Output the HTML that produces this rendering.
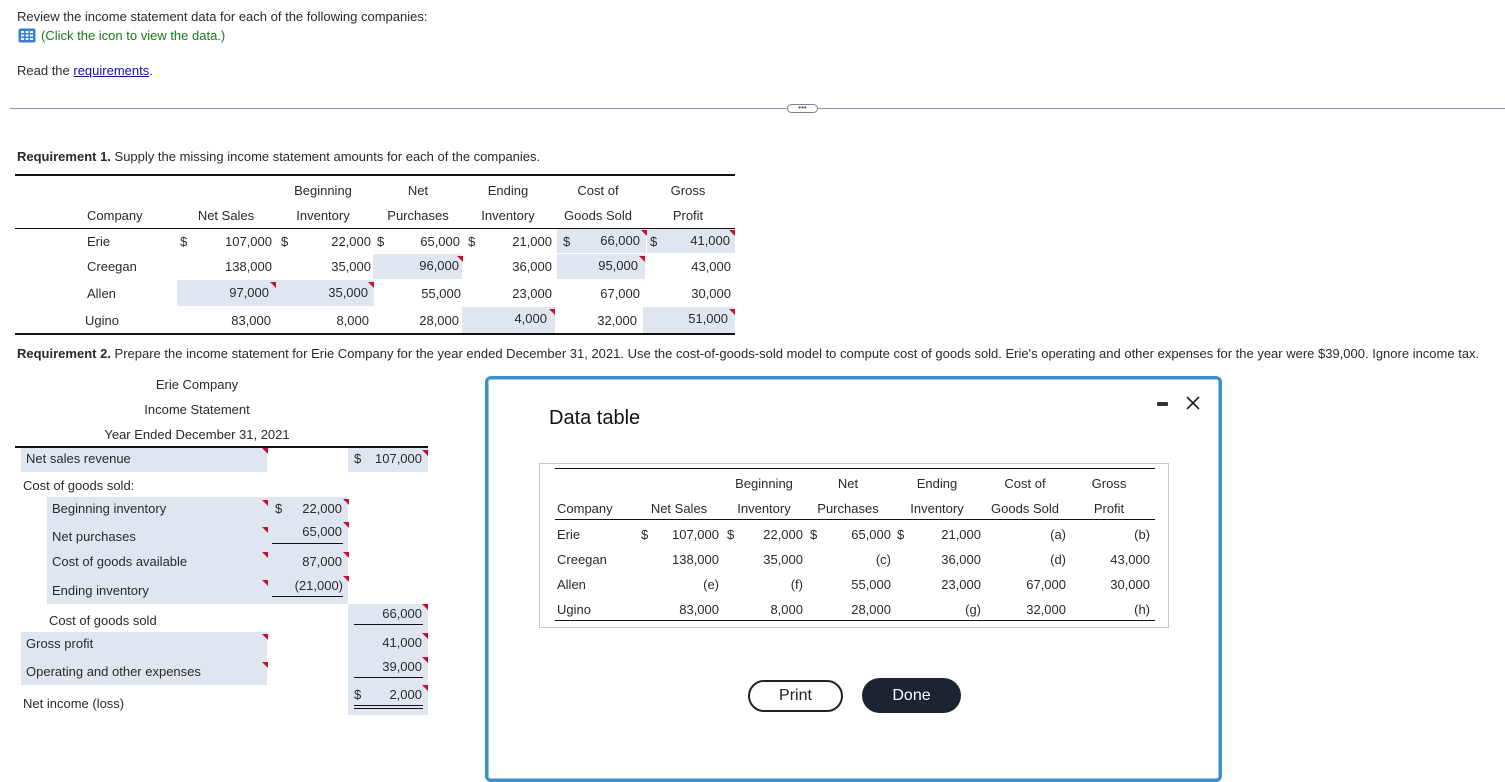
<!DOCTYPE html>
<html><head><meta charset="utf-8"><style>
body{margin:0;width:1505px;height:729px;overflow:hidden;background:#fff;font-family:"Liberation Sans",Arial,sans-serif;font-size:13px;color:#2a2a2a;position:relative}
.a{position:absolute;height:16px;line-height:16px;white-space:nowrap}
.r{text-align:right}.c{text-align:center}
.sh{position:absolute;background:#dfe6f0}
.ln{position:absolute;background:#111;height:2px}
.ul{position:absolute;background:#111;height:1px}
.tri{position:absolute;width:0;height:0;border-top:6px solid #c8102e;border-left:6px solid transparent}
</style></head><body>
<div class="a" style="left:17px;top:9px">Review the income statement data for each of the following companies:</div>
<svg style="position:absolute;left:18px;top:28px" width="18" height="15"><rect x="0.5" y="0.5" width="17" height="14" rx="2" fill="#3a7fd5"/><g fill="#fff"><rect x="3" y="3" width="3" height="2"/><rect x="7.5" y="3" width="3" height="2"/><rect x="12" y="3" width="3" height="2"/><rect x="3" y="6.5" width="3" height="2"/><rect x="7.5" y="6.5" width="3" height="2"/><rect x="12" y="6.5" width="3" height="2"/><rect x="3" y="10" width="3" height="2"/><rect x="7.5" y="10" width="3" height="2"/><rect x="12" y="10" width="3" height="2"/></g></svg>
<div class="a" style="left:41px;top:28px;color:#1a7a1a">(Click the icon to view the data.)</div>
<div class="a" style="left:17px;top:63px">Read the <span style="color:#1a0dab;text-decoration:underline">requirements</span>.</div>
<div style="position:absolute;left:10px;top:108px;width:1495px;height:1px;background:#8a94a4"></div>
<div style="position:absolute;left:787px;top:104px;width:29px;height:7px;border:1px solid #7a8494;border-radius:5px;background:#fff;font-size:8px;line-height:6px;text-align:center;color:#555">•••</div>

<div class="a" style="left:17px;top:149px"><b>Requirement 1.</b> Supply the missing income statement amounts for each of the companies.</div>

<div class="sh" style="left:557px;top:228px;width:89px;height:25px"></div>
<div class="sh" style="left:647px;top:228px;width:88px;height:25px"></div>
<div class="sh" style="left:373px;top:254px;width:89px;height:25px"></div>
<div class="sh" style="left:557px;top:254px;width:88px;height:25px"></div>
<div class="sh" style="left:177px;top:280px;width:197px;height:26px"></div>
<div class="sh" style="left:462px;top:307px;width:93px;height:26px"></div>
<div class="sh" style="left:643px;top:307px;width:92px;height:26px"></div>
<div class="ln" style="left:15px;top:174px;width:720px"></div>
<div class="ln" style="left:15px;top:228px;width:720px;height:1px"></div>
<div class="ln" style="left:15px;top:333px;width:720px"></div>
<div class="tri" style="left:641px;top:230px"></div><div class="tri" style="left:729px;top:230px"></div>
<div class="tri" style="left:457px;top:256px"></div><div class="tri" style="left:639px;top:256px"></div>
<div class="tri" style="left:270px;top:282px"></div><div class="tri" style="left:368px;top:282px"></div>
<div class="tri" style="left:549px;top:309px"></div><div class="tri" style="left:729px;top:309px"></div>

<div class="a c" style="left:283px;width:80px;top:183px">Beginning</div>
<div class="a c" style="left:378px;width:80px;top:183px">Net</div>
<div class="a c" style="left:468px;width:80px;top:183px">Ending</div>
<div class="a c" style="left:558px;width:80px;top:183px">Cost of</div>
<div class="a c" style="left:648px;width:80px;top:183px">Gross</div>
<div class="a" style="left:87px;top:208px">Company</div>
<div class="a c" style="left:186px;width:80px;top:208px">Net Sales</div>
<div class="a c" style="left:283px;width:80px;top:208px">Inventory</div>
<div class="a c" style="left:378px;width:80px;top:208px">Purchases</div>
<div class="a c" style="left:468px;width:80px;top:208px">Inventory</div>
<div class="a c" style="left:558px;width:80px;top:208px">Goods Sold</div>
<div class="a c" style="left:648px;width:80px;top:208px">Profit</div>

<div class="a" style="left:87px;top:234px">Erie</div>
<div class="a" style="left:87px;top:259px">Creegan</div>
<div class="a" style="left:87px;top:286px">Allen</div>
<div class="a" style="left:85px;top:313px">Ugino</div>
<div class="a" style="left:180px;top:234px">$</div>
<div class="a" style="left:281px;top:234px">$</div>
<div class="a" style="left:377px;top:234px">$</div>
<div class="a" style="left:468px;top:234px">$</div>
<div class="a" style="left:563px;top:234px">$</div>
<div class="a" style="left:650px;top:234px">$</div>
<div class="a r" style="left:180px;width:92px;top:234px">107,000</div>
<div class="a r" style="left:280px;width:91px;top:234px">22,000</div>
<div class="a r" style="left:380px;width:80px;top:234px">65,000</div>
<div class="a r" style="left:470px;width:82px;top:234px">21,000</div>
<div class="a r" style="left:560px;width:80px;top:233px">66,000</div>
<div class="a r" style="left:650px;width:80px;top:233px">41,000</div>
<div class="a r" style="left:180px;width:92px;top:259px">138,000</div>
<div class="a r" style="left:280px;width:91px;top:259px">35,000</div>
<div class="a r" style="left:380px;width:79px;top:258px">96,000</div>
<div class="a r" style="left:470px;width:82px;top:259px">36,000</div>
<div class="a r" style="left:560px;width:78px;top:258px">95,000</div>
<div class="a r" style="left:650px;width:81px;top:259px">43,000</div>
<div class="a r" style="left:180px;width:89px;top:285px">97,000</div>
<div class="a r" style="left:280px;width:88px;top:285px">35,000</div>
<div class="a r" style="left:380px;width:81px;top:286px">55,000</div>
<div class="a r" style="left:470px;width:82px;top:286px">23,000</div>
<div class="a r" style="left:560px;width:80px;top:286px">67,000</div>
<div class="a r" style="left:650px;width:81px;top:286px">30,000</div>
<div class="a r" style="left:180px;width:91px;top:313px">83,000</div>
<div class="a r" style="left:280px;width:89px;top:313px">8,000</div>
<div class="a r" style="left:380px;width:79px;top:313px">28,000</div>
<div class="a r" style="left:470px;width:77px;top:311px">4,000</div>
<div class="a r" style="left:560px;width:77px;top:313px">32,000</div>
<div class="a r" style="left:650px;width:78px;top:311px">51,000</div>

<div class="a" style="left:17px;top:346px"><b>Requirement 2.</b> Prepare the income statement for Erie Company for the year ended December 31, 2021. Use the cost-of-goods-sold model to compute cost of goods sold. Erie's operating and other expenses for the year were $39,000. Ignore income tax.</div>

<div class="a c" style="left:97px;width:200px;top:377px">Erie Company</div>
<div class="a c" style="left:97px;width:200px;top:402px">Income Statement</div>
<div class="a c" style="left:97px;width:200px;top:427px">Year Ended December 31, 2021</div>
<div class="ln" style="left:15px;top:446px;width:413px"></div>
<div class="sh" style="left:21px;top:448px;width:246px;height:24px"></div>
<div class="sh" style="left:348px;top:448px;width:80px;height:24px"></div>
<div class="sh" style="left:47px;top:497px;width:301px;height:107px"></div>
<div class="sh" style="left:348px;top:604px;width:80px;height:111px"></div>
<div class="sh" style="left:21px;top:632px;width:246px;height:53px"></div>
<div class="a" style="left:26px;top:451px">Net sales revenue</div>
<div class="a" style="left:354px;top:451px">$</div>
<div class="a r" style="left:360px;width:62px;top:451px">107,000</div>
<div class="a" style="left:23px;top:478px">Cost of goods sold:</div>
<div class="a" style="left:52px;top:501px">Beginning inventory</div>
<div class="a" style="left:52px;top:529px">Net purchases</div>
<div class="a" style="left:52px;top:554px">Cost of goods available</div>
<div class="a" style="left:52px;top:583px">Ending inventory</div>
<div class="a" style="left:275px;top:501px">$</div>
<div class="a r" style="left:280px;width:62px;top:501px">22,000</div>
<div class="a r" style="left:280px;width:62px;top:524px">65,000</div>
<div class="ul" style="left:272px;top:543px;width:71px"></div>
<div class="a r" style="left:280px;width:62px;top:554px">87,000</div>
<div class="a r" style="left:280px;width:63px;top:578px">(21,000)</div>
<div class="ul" style="left:272px;top:596px;width:71px"></div>
<div class="a" style="left:49px;top:613px">Cost of goods sold</div>
<div class="a r" style="left:360px;width:62px;top:606px">66,000</div>
<div class="ul" style="left:354px;top:624px;width:69px"></div>
<div class="a" style="left:26px;top:636px">Gross profit</div>
<div class="a" style="left:26px;top:664px">Operating and other expenses</div>
<div class="a r" style="left:360px;width:62px;top:635px">41,000</div>
<div class="a r" style="left:360px;width:62px;top:659px">39,000</div>
<div class="ul" style="left:354px;top:677px;width:69px"></div>
<div class="a" style="left:23px;top:696px">Net income (loss)</div>
<div class="a" style="left:354px;top:687px">$</div>
<div class="a r" style="left:360px;width:62px;top:687px">2,000</div>
<div class="ul" style="left:354px;top:705px;width:69px"></div>
<div class="ul" style="left:354px;top:708px;width:69px"></div>
<div class="tri" style="left:262px;top:448px"></div><div class="tri" style="left:422px;top:450px"></div>
<div class="tri" style="left:262px;top:500px"></div><div class="tri" style="left:343px;top:499px"></div>
<div class="tri" style="left:262px;top:527px"></div><div class="tri" style="left:343px;top:522px"></div>
<div class="tri" style="left:262px;top:552px"></div><div class="tri" style="left:343px;top:552px"></div>
<div class="tri" style="left:262px;top:580px"></div><div class="tri" style="left:343px;top:576px"></div>
<div class="tri" style="left:422px;top:604px"></div>
<div class="tri" style="left:262px;top:634px"></div><div class="tri" style="left:422px;top:633px"></div>
<div class="tri" style="left:262px;top:662px"></div><div class="tri" style="left:422px;top:657px"></div>
<div class="tri" style="left:422px;top:685px"></div>

<div style="position:absolute;left:485px;top:376px;width:731px;height:400px;border:3px solid #3d8fc9;border-radius:6px;background:#fff;box-shadow:inset 0 0 0 1px #9cc7e8"></div>
<div class="a" style="left:549px;top:406px;font-size:20px;height:24px;line-height:24px;color:#111">Data table</div>
<div style="position:absolute;left:1157px;top:402px;width:11px;height:4px;background:#333;border-radius:1px"></div>
<svg style="position:absolute;left:1186px;top:396px" width="14" height="14"><path d="M1 1L13 13M13 1L1 13" stroke="#222" stroke-width="1.6"/></svg>
<div style="position:absolute;left:539px;top:463px;width:628px;height:163px;border:1px solid #c8c8c8"></div>
<div class="ln" style="left:555px;top:468px;width:600px;height:1px"></div>
<div class="ln" style="left:555px;top:519px;width:600px;height:1px"></div>
<div class="ln" style="left:555px;top:620px;width:600px;height:1px"></div>
<div class="a c" style="left:724px;width:80px;top:476px">Beginning</div>
<div class="a c" style="left:808px;width:80px;top:476px">Net</div>
<div class="a c" style="left:897px;width:80px;top:476px">Ending</div>
<div class="a c" style="left:985px;width:80px;top:476px">Cost of</div>
<div class="a c" style="left:1069px;width:80px;top:476px">Gross</div>
<div class="a" style="left:557px;top:501px">Company</div>
<div class="a c" style="left:639px;width:80px;top:501px">Net Sales</div>
<div class="a c" style="left:724px;width:80px;top:501px">Inventory</div>
<div class="a c" style="left:808px;width:80px;top:501px">Purchases</div>
<div class="a c" style="left:897px;width:80px;top:501px">Inventory</div>
<div class="a c" style="left:985px;width:80px;top:501px">Goods Sold</div>
<div class="a c" style="left:1069px;width:80px;top:501px">Profit</div>
<div class="a" style="left:557px;top:527px">Erie</div>
<div class="a" style="left:557px;top:552px">Creegan</div>
<div class="a" style="left:557px;top:577px">Allen</div>
<div class="a" style="left:557px;top:602px">Ugino</div>
<div class="a" style="left:641px;top:527px">$</div>
<div class="a" style="left:727px;top:527px">$</div>
<div class="a" style="left:810px;top:527px">$</div>
<div class="a" style="left:897px;top:527px">$</div>
<div class="a r" style="left:640px;width:79px;top:527px">107,000</div>
<div class="a r" style="left:730px;width:73px;top:527px">22,000</div>
<div class="a r" style="left:815px;width:76px;top:527px">65,000</div>
<div class="a r" style="left:900px;width:81px;top:527px">21,000</div>
<div class="a r" style="left:990px;width:76px;top:527px">(a)</div>
<div class="a r" style="left:1070px;width:80px;top:527px">(b)</div>
<div class="a r" style="left:640px;width:79px;top:552px">138,000</div>
<div class="a r" style="left:730px;width:73px;top:552px">35,000</div>
<div class="a r" style="left:815px;width:76px;top:552px">(c)</div>
<div class="a r" style="left:900px;width:81px;top:552px">36,000</div>
<div class="a r" style="left:990px;width:76px;top:552px">(d)</div>
<div class="a r" style="left:1070px;width:80px;top:552px">43,000</div>
<div class="a r" style="left:640px;width:79px;top:577px">(e)</div>
<div class="a r" style="left:730px;width:73px;top:577px">(f)</div>
<div class="a r" style="left:815px;width:76px;top:577px">55,000</div>
<div class="a r" style="left:900px;width:81px;top:577px">23,000</div>
<div class="a r" style="left:990px;width:76px;top:577px">67,000</div>
<div class="a r" style="left:1070px;width:80px;top:577px">30,000</div>
<div class="a r" style="left:640px;width:79px;top:602px">83,000</div>
<div class="a r" style="left:730px;width:73px;top:602px">8,000</div>
<div class="a r" style="left:815px;width:76px;top:602px">28,000</div>
<div class="a r" style="left:900px;width:81px;top:602px">(g)</div>
<div class="a r" style="left:990px;width:76px;top:602px">32,000</div>
<div class="a r" style="left:1070px;width:80px;top:602px">(h)</div>
<div style="position:absolute;left:748px;top:680px;width:91px;height:28px;border:2px solid #222;border-radius:16px;text-align:center;line-height:28px;font-size:16px;color:#222">Print</div>
<div style="position:absolute;left:862px;top:678px;width:99px;height:35px;background:#1c2331;border-radius:18px;text-align:center;line-height:35px;font-size:16px;color:#fff">Done</div>
</body></html>
